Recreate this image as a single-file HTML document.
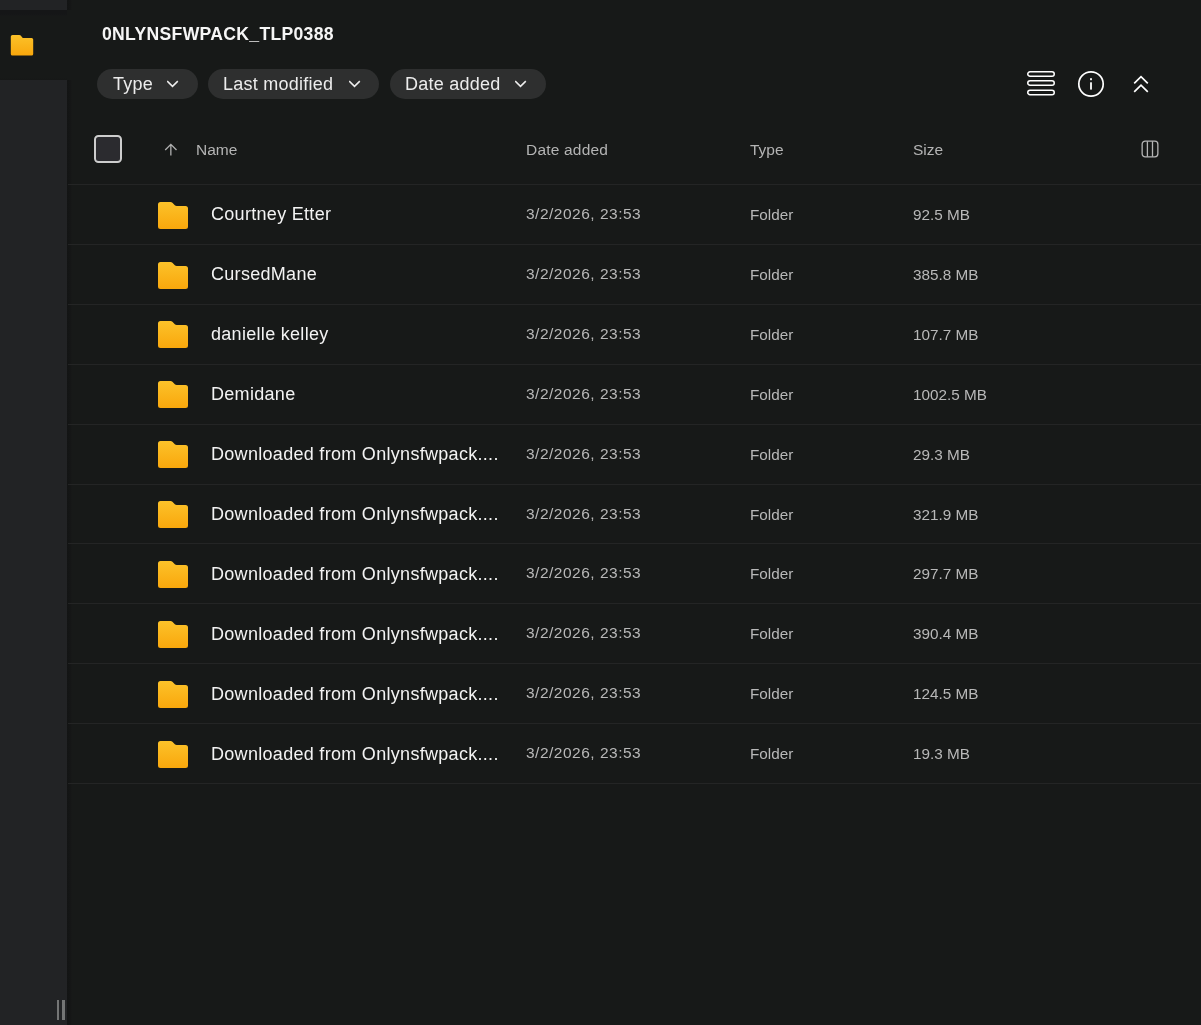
<!DOCTYPE html>
<html><head><meta charset="utf-8">
<style>
*{box-sizing:border-box;margin:0;padding:0}
html,body{width:1201px;height:1025px;overflow:hidden;background:#171918;font-family:"Liberation Sans",sans-serif}
.abs{position:absolute}
.title,.chip span,.hdr,.row div{will-change:transform}
#side{position:absolute;left:0;top:0;width:67px;height:1025px;background:#222325}
#sel{position:absolute;left:0;top:10px;width:67px;height:70px;background:linear-gradient(180deg,#151617 0,#151617 4px,#171918 6px,#171918 68px,#161717 70px)}
.shadow{position:absolute;left:67px;width:5px;background:linear-gradient(90deg,#131414,#151616 70%,#171918)}
.handle{position:absolute;top:1000px;width:2.5px;height:20px;background:#747575}
.title{position:absolute;left:102px;top:23.8px;font-size:17.6px;font-weight:700;color:#f6f6f6;white-space:nowrap;line-height:20px;letter-spacing:0.3px}
.chip{position:absolute;top:69px;height:30px;border-radius:15px;background:#2e2f2f}
.chip span{position:absolute;top:5px;font-size:18px;line-height:20px;color:#ececec;white-space:nowrap;letter-spacing:0.25px}
.chip svg{position:absolute;top:11px}
.hdr{position:absolute;top:141.5px;font-size:15.5px;line-height:16px;color:#b4b4b4;white-space:nowrap}
.sep{position:absolute;left:68px;width:1133px;height:1px;background:#242525}
.row .nm{position:absolute;left:211px;font-size:18px;line-height:20px;color:#f3f3f3;white-space:nowrap;letter-spacing:0.3px}
.row .dt{position:absolute;left:526px;font-size:15.5px;line-height:16px;color:#b8b8b8;white-space:nowrap;letter-spacing:0.5px}
.row .ty{position:absolute;left:750px;font-size:15.3px;line-height:16px;color:#b8b8b8;white-space:nowrap}
.row .sz{position:absolute;left:913px;font-size:15.3px;line-height:16px;color:#b8b8b8;white-space:nowrap}
.row svg{position:absolute;left:157px}
</style></head>
<body>
<div id="side">
  <div id="sel">
    <svg class="abs" style="left:10px;top:23.6px" width="24" height="23" viewBox="0 0 24 23"><defs><linearGradient id="fg0" x1="0" y1="0" x2="0" y2="1"><stop offset="0" stop-color="#fcc22a"/><stop offset="1" stop-color="#f9a70c"/></linearGradient></defs><path d="M2.5 1 H9.3 Q10.1 1 10.7 1.6 L12.3 3.4 Q12.8 4 13.6 4 H21.6 Q23.2 4 23.2 5.6 V20 Q23.2 21.5 21.6 21.5 H2.4 Q0.8 21.5 0.8 20 V2.5 Q0.8 1 2.5 1 Z" fill="url(#fg0)"/></svg>
  </div>
  <div class="handle" style="left:56.9px"></div>
  <div class="handle" style="left:62.1px"></div>
</div>
<div class="shadow" style="top:0;height:10px"></div><div class="shadow" style="top:80px;height:945px"></div>

<div class="title">0NLYNSFWPACK_TLP0388</div>

<div class="chip" style="left:97px;width:101px"><span style="left:16px">Type</span>
<svg style="left:70px" width="13" height="8" viewBox="0 0 13 8"><path d="M0.2 1.1 L5.5 6.4 L10.8 1.1" fill="none" stroke="#eeeeee" stroke-width="1.5"/></svg></div>
<div class="chip" style="left:208px;width:171px"><span style="left:15px">Last modified</span>
<svg style="left:141px" width="13" height="8" viewBox="0 0 13 8"><path d="M0.2 1.1 L5.5 6.4 L10.8 1.1" fill="none" stroke="#eeeeee" stroke-width="1.5"/></svg></div>
<div class="chip" style="left:390px;width:156px"><span style="left:15px">Date added</span>
<svg style="left:125.3px" width="13" height="8" viewBox="0 0 13 8"><path d="M0.2 1.1 L5.5 6.4 L10.8 1.1" fill="none" stroke="#eeeeee" stroke-width="1.5"/></svg></div>

<!-- right icons -->
<svg class="abs" style="left:1026px;top:70px" width="30" height="27" viewBox="0 0 30 27">
<rect x="1.75" y="1.75" width="26.5" height="4.5" rx="2.25" fill="none" stroke="#fff" stroke-width="1.5"/>
<rect x="1.75" y="10.75" width="26.5" height="4.5" rx="2.25" fill="none" stroke="#fff" stroke-width="1.5"/>
<rect x="1.75" y="20.25" width="26.5" height="4.5" rx="2.25" fill="none" stroke="#fff" stroke-width="1.5"/>
</svg>
<svg class="abs" style="left:1077px;top:70px" width="28" height="28" viewBox="0 0 28 28">
<circle cx="14" cy="14" r="12.2" fill="none" stroke="#fff" stroke-width="1.7"/>
<rect x="13.1" y="8.2" width="1.8" height="2" fill="#fff"/>
<rect x="13.1" y="12.3" width="1.8" height="7.3" fill="#fff"/>
</svg>
<svg class="abs" style="left:1132px;top:74px" width="18" height="20" viewBox="0 0 18 20">
<path d="M2.2 9.3 L9 2.6 L15.8 9.3 M2.2 17.9 L9 11.2 L15.8 17.9" fill="none" stroke="#fff" stroke-width="1.7"/>
</svg>

<!-- header -->
<div class="abs" style="left:94px;top:135px;width:28px;height:28px;border:2px solid #cdcdcd;border-radius:4.5px;background:#2b2b2f"></div>
<svg class="abs" style="left:163px;top:142px" width="15" height="16" viewBox="0 0 15 16"><path d="M7.85 13.4 V2.6 M2.2 8 L7.85 2.35 L13.5 8" fill="none" stroke="#b0b0b0" stroke-width="1.3"/></svg>
<div class="hdr" style="left:196px">Name</div>
<div class="hdr" style="left:526px;letter-spacing:0.2px">Date added</div>
<div class="hdr" style="left:750px">Type</div>
<div class="hdr" style="left:913px">Size</div>
<svg class="abs" style="left:1141px;top:140px" width="18" height="18" viewBox="0 0 18 18">
<rect x="1.15" y="1.15" width="15.7" height="15.7" rx="3" fill="none" stroke="#b5b5b5" stroke-width="1.3"/>
<path d="M6.4 1.2 V16.8 M11.5 1.2 V16.8" stroke="#b5b5b5" stroke-width="1.3"/>
</svg>

<div id="rows"><svg width="0" height="0" style="position:absolute"><defs><linearGradient id="fg" x1="0" y1="0" x2="0" y2="1"><stop offset="0" stop-color="#fcc22a"/><stop offset="1" stop-color="#f9a70c"/></linearGradient></defs></svg>
<div class="sep" style="top:184px"></div>
<div class="sep" style="top:244px"></div>
<div class="sep" style="top:304px"></div>
<div class="sep" style="top:364px"></div>
<div class="sep" style="top:424px"></div>
<div class="sep" style="top:484px"></div>
<div class="sep" style="top:543px"></div>
<div class="sep" style="top:603px"></div>
<div class="sep" style="top:663px"></div>
<div class="sep" style="top:723px"></div>
<div class="sep" style="top:783px"></div>
<div class="row"><svg style="top:200.60px" width="32" height="29" viewBox="0 0 32 29"><path d="M3.5 1 H13.5 Q14.6 1 15.4 1.8 L17.8 4.2 Q18.6 5 19.7 5 H28.5 Q31 5 31 7.5 V25.5 Q31 28 28.5 28 H3.5 Q1 28 1 25.5 V3.5 Q1 1 3.5 1 Z" fill="url(#fg)"/></svg><div class="nm" style="top:204.40px">Courtney Etter</div><div class="dt" style="top:206.00px">3/2/2026, 23:53</div><div class="ty" style="top:207.00px">Folder</div><div class="sz" style="top:207.00px">92.5 MB</div></div>
<div class="row"><svg style="top:260.50px" width="32" height="29" viewBox="0 0 32 29"><path d="M3.5 1 H13.5 Q14.6 1 15.4 1.8 L17.8 4.2 Q18.6 5 19.7 5 H28.5 Q31 5 31 7.5 V25.5 Q31 28 28.5 28 H3.5 Q1 28 1 25.5 V3.5 Q1 1 3.5 1 Z" fill="url(#fg)"/></svg><div class="nm" style="top:264.30px">CursedMane</div><div class="dt" style="top:265.90px">3/2/2026, 23:53</div><div class="ty" style="top:266.90px">Folder</div><div class="sz" style="top:266.90px">385.8 MB</div></div>
<div class="row"><svg style="top:320.40px" width="32" height="29" viewBox="0 0 32 29"><path d="M3.5 1 H13.5 Q14.6 1 15.4 1.8 L17.8 4.2 Q18.6 5 19.7 5 H28.5 Q31 5 31 7.5 V25.5 Q31 28 28.5 28 H3.5 Q1 28 1 25.5 V3.5 Q1 1 3.5 1 Z" fill="url(#fg)"/></svg><div class="nm" style="top:324.20px">danielle kelley</div><div class="dt" style="top:325.80px">3/2/2026, 23:53</div><div class="ty" style="top:326.80px">Folder</div><div class="sz" style="top:326.80px">107.7 MB</div></div>
<div class="row"><svg style="top:380.30px" width="32" height="29" viewBox="0 0 32 29"><path d="M3.5 1 H13.5 Q14.6 1 15.4 1.8 L17.8 4.2 Q18.6 5 19.7 5 H28.5 Q31 5 31 7.5 V25.5 Q31 28 28.5 28 H3.5 Q1 28 1 25.5 V3.5 Q1 1 3.5 1 Z" fill="url(#fg)"/></svg><div class="nm" style="top:384.10px">Demidane</div><div class="dt" style="top:385.70px">3/2/2026, 23:53</div><div class="ty" style="top:386.70px">Folder</div><div class="sz" style="top:386.70px">1002.5 MB</div></div>
<div class="row"><svg style="top:440.20px" width="32" height="29" viewBox="0 0 32 29"><path d="M3.5 1 H13.5 Q14.6 1 15.4 1.8 L17.8 4.2 Q18.6 5 19.7 5 H28.5 Q31 5 31 7.5 V25.5 Q31 28 28.5 28 H3.5 Q1 28 1 25.5 V3.5 Q1 1 3.5 1 Z" fill="url(#fg)"/></svg><div class="nm" style="top:444.00px">Downloaded from Onlynsfwpack....</div><div class="dt" style="top:445.60px">3/2/2026, 23:53</div><div class="ty" style="top:446.60px">Folder</div><div class="sz" style="top:446.60px">29.3 MB</div></div>
<div class="row"><svg style="top:500.10px" width="32" height="29" viewBox="0 0 32 29"><path d="M3.5 1 H13.5 Q14.6 1 15.4 1.8 L17.8 4.2 Q18.6 5 19.7 5 H28.5 Q31 5 31 7.5 V25.5 Q31 28 28.5 28 H3.5 Q1 28 1 25.5 V3.5 Q1 1 3.5 1 Z" fill="url(#fg)"/></svg><div class="nm" style="top:503.90px">Downloaded from Onlynsfwpack....</div><div class="dt" style="top:505.50px">3/2/2026, 23:53</div><div class="ty" style="top:506.50px">Folder</div><div class="sz" style="top:506.50px">321.9 MB</div></div>
<div class="row"><svg style="top:560.00px" width="32" height="29" viewBox="0 0 32 29"><path d="M3.5 1 H13.5 Q14.6 1 15.4 1.8 L17.8 4.2 Q18.6 5 19.7 5 H28.5 Q31 5 31 7.5 V25.5 Q31 28 28.5 28 H3.5 Q1 28 1 25.5 V3.5 Q1 1 3.5 1 Z" fill="url(#fg)"/></svg><div class="nm" style="top:563.80px">Downloaded from Onlynsfwpack....</div><div class="dt" style="top:565.40px">3/2/2026, 23:53</div><div class="ty" style="top:566.40px">Folder</div><div class="sz" style="top:566.40px">297.7 MB</div></div>
<div class="row"><svg style="top:619.90px" width="32" height="29" viewBox="0 0 32 29"><path d="M3.5 1 H13.5 Q14.6 1 15.4 1.8 L17.8 4.2 Q18.6 5 19.7 5 H28.5 Q31 5 31 7.5 V25.5 Q31 28 28.5 28 H3.5 Q1 28 1 25.5 V3.5 Q1 1 3.5 1 Z" fill="url(#fg)"/></svg><div class="nm" style="top:623.70px">Downloaded from Onlynsfwpack....</div><div class="dt" style="top:625.30px">3/2/2026, 23:53</div><div class="ty" style="top:626.30px">Folder</div><div class="sz" style="top:626.30px">390.4 MB</div></div>
<div class="row"><svg style="top:679.80px" width="32" height="29" viewBox="0 0 32 29"><path d="M3.5 1 H13.5 Q14.6 1 15.4 1.8 L17.8 4.2 Q18.6 5 19.7 5 H28.5 Q31 5 31 7.5 V25.5 Q31 28 28.5 28 H3.5 Q1 28 1 25.5 V3.5 Q1 1 3.5 1 Z" fill="url(#fg)"/></svg><div class="nm" style="top:683.60px">Downloaded from Onlynsfwpack....</div><div class="dt" style="top:685.20px">3/2/2026, 23:53</div><div class="ty" style="top:686.20px">Folder</div><div class="sz" style="top:686.20px">124.5 MB</div></div>
<div class="row"><svg style="top:739.70px" width="32" height="29" viewBox="0 0 32 29"><path d="M3.5 1 H13.5 Q14.6 1 15.4 1.8 L17.8 4.2 Q18.6 5 19.7 5 H28.5 Q31 5 31 7.5 V25.5 Q31 28 28.5 28 H3.5 Q1 28 1 25.5 V3.5 Q1 1 3.5 1 Z" fill="url(#fg)"/></svg><div class="nm" style="top:743.50px">Downloaded from Onlynsfwpack....</div><div class="dt" style="top:745.10px">3/2/2026, 23:53</div><div class="ty" style="top:746.10px">Folder</div><div class="sz" style="top:746.10px">19.3 MB</div></div>
</div>
</body></html>
